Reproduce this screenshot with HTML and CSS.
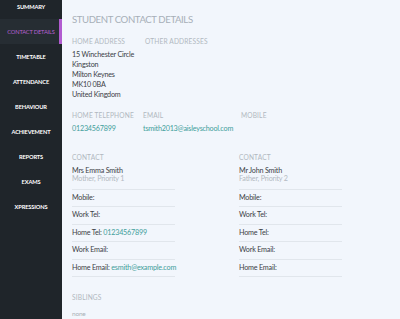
FILE: index.html
```html
<!DOCTYPE html>
<html>
<head>
<meta charset="utf-8">
<link rel="stylesheet" href="styles.css">
</head>
<body>
<div class="app">
  <nav class="sidebar">
    <div class="nav-list">
      <div class="nav-item">SUMMARY</div>
      <div class="nav-item active">CONTACT DETAILS</div>
      <div class="nav-item">TIMETABLE</div>
      <div class="nav-item">ATTENDANCE</div>
      <div class="nav-item">BEHAVIOUR</div>
      <div class="nav-item">ACHIEVEMENT</div>
      <div class="nav-item">REPORTS</div>
      <div class="nav-item">EXAMS</div>
      <div class="nav-item">XPRESSIONS</div>
    </div>
  </nav>
  <main class="main">
    <h1 class="title">STUDENT CONTACT DETAILS</h1>

    <div class="cols">
      <div class="col col-a">
        <div class="label">HOME ADDRESS</div>
        <div class="address">
          <div>15 Winchester Circle</div>
          <div>Kingston</div>
          <div>Milton Keynes</div>
          <div>MK10 0BA</div>
          <div>United Kingdom</div>
        </div>
      </div>
      <div class="col">
        <div class="label">OTHER ADDRESSES</div>
      </div>
    </div>

    <div class="cols phones">
      <div class="col col-a2">
        <div class="label">HOME TELEPHONE</div>
        <div class="value link">01234567899</div>
      </div>
      <div class="col col-b2">
        <div class="label">EMAIL</div>
        <div class="value link">tsmith2013@aisleyschool.com</div>
      </div>
      <div class="col">
        <div class="label">MOBILE</div>
      </div>
    </div>

    <div class="contacts">
      <div class="contact">
        <div class="label">CONTACT</div>
        <div class="name">Mrs Emma Smith</div>
        <div class="relation">Mother, Priority 1</div>
        <div class="rows">
          <div class="row">Mobile:</div>
          <div class="row">Work Tel:</div>
          <div class="row">Home Tel: <span class="link">01234567899</span></div>
          <div class="row">Work Email:</div>
          <div class="row">Home Email: <span class="link">esmith@example.com</span></div>
        </div>
      </div>
      <div class="contact">
        <div class="label">CONTACT</div>
        <div class="name">Mr John Smith</div>
        <div class="relation">Father, Priority 2</div>
        <div class="rows">
          <div class="row">Mobile:</div>
          <div class="row">Work Tel:</div>
          <div class="row">Home Tel:</div>
          <div class="row">Work Email:</div>
          <div class="row">Home Email:</div>
        </div>
      </div>
    </div>

    <div class="siblings">
      <div class="label">SIBLINGS</div>
      <div class="none">none</div>
    </div>
  </main>
</div>
</body>
</html>
```

FILE: styles.css
```css
html, body {
  margin: 0;
  padding: 0;
  height: 100%;
  overflow: hidden;
}
body {
  background: #f2f6fc;
  font-family: "Lato", "Liberation Sans", sans-serif;
}
.app {
  display: flex;
  height: 319px;
}
.sidebar {
  width: 62px;
  flex: 0 0 62px;
  background: #1f252a;
  overflow: hidden;
}
.nav-list {
  margin-top: -6px;
  display: flex;
  flex-direction: column;
}
.nav-item {
  height: 25px;
  display: flex;
  align-items: center;
  justify-content: center;
  color: #ffffff;
  font-size: 5.7px;
  font-weight: 700;
  letter-spacing: -0.15px;
  white-space: nowrap;
}
.nav-item.active {
  background: #262d33;
  color: #b761d2;
  font-weight: 400;
  box-shadow: inset -3px 0 0 #b15bd0;
}
.main {
  flex: 1;
  padding: 14px 0 0 10px;
  color: #3c4146;
  font-size: 7.2px;
  letter-spacing: -0.2px;
}
.title {
  margin: 0 0 11px;
  font-size: 9.6px;
  font-weight: 400;
  color: #a7afb8;
  letter-spacing: -0.4px;
  line-height: 12px;
}
.label {
  font-size: 6.6px;
  color: #b1b8c0;
  line-height: 8px;
  letter-spacing: 0.15px;
}
.cols {
  display: flex;
}
.col-a { width: 73px; }
.col-a2 { width: 71px; }
.col-b2 { width: 98px; }
.address {
  margin-top: 4.5px;
  line-height: 10px;
}
.phones {
  margin-top: 11px;
}
.value {
  margin-top: 5px;
  line-height: 10px;
}
.link {
  color: #3f9e9b;
}
.contacts {
  margin-top: 19px;
  display: grid;
  grid-template-columns: 167px 103px;
}
.name {
  margin-top: 6px;
  line-height: 8px;
}
.relation {
  color: #b2b9c1;
  line-height: 8px;
}
.rows {
  margin-top: 6px;
  border-top: 1px solid #e1e6ec;
  width: 103px;
}
.row {
  height: 16.5px;
  line-height: 16.5px;
  border-bottom: 1px solid #e1e6ec;
  white-space: nowrap;
}
.siblings {
  margin-top: 16px;
}
.none {
  margin-top: 9px;
  color: #a9b0b8;
  font-size: 6.5px;
}
```
